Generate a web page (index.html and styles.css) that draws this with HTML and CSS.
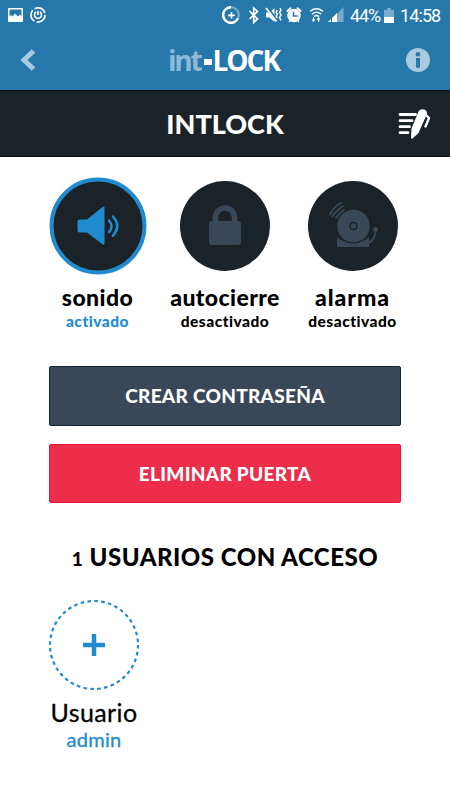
FILE: index.html
```html
<!DOCTYPE html>
<html lang="es">
<head>
    <meta charset="UTF-8">
    <meta name="viewport" content="width=device-width, initial-scale=1.0">
    <title>int-LOCK</title>
    <link rel="stylesheet" href="styles.css">
</head>
<body>
    <header class="top">
        <div class="status-bar">
            <svg class="status-left" width="48" height="32" viewBox="0 0 48 32" fill="none">
                <rect x="8" y="8" width="15" height="14" rx="1" fill="#fff"/>
                <path d="M9.500 9.500h12v7l-1.500-2-2 2-3-3-2.500 3-1.500-1.500-1.500 1.500z" fill="#2678ab"/>
                <circle cx="38" cy="15" r="7.100" stroke="#fff" stroke-width="1.700" stroke-dasharray="12.500 2.370"/>
                <path d="M36 12a3.500 3.500 0 1 0 4 0M38 11v4" stroke="#fff" stroke-width="1.600"/>
            </svg>
            <div class="status-right">
                <svg width="130" height="32" viewBox="220 0 130 32" fill="none">
                    <circle cx="231" cy="15" r="7.800" stroke="#78abcb" stroke-width="2.200"/>
                    <path d="M231 7.200a7.800 7.800 0 1 0 7 11" stroke="#fff" stroke-width="2.400"/>
                    <path d="M231.500 12v6.600M228.200 15.300h6.600" stroke="#fff" stroke-width="1.700"/>
                    <path d="M249.500 11l8 8-3.800 3.500V8l3.800 3.500-8 7.500" stroke="#fff" stroke-width="1.700"/>
                    <path d="M266 12.500h3.500l5-4.500v14l-5-4.500H266z" fill="#fff"/>
                    <path d="M267 7.500l10 13" stroke="#2678ab" stroke-width="3"/>
                    <path d="M266 8l10.500 13.500" stroke="#fff" stroke-width="1.700"/>
                    <path d="M277.200 10l-1 2 1 2-1 2 1 2M280 8l1 2-1.500 2.500 1.500 2.500-1.500 2.500 1.500 3" stroke="#fff" stroke-width="1.500"/>
                    <circle cx="294" cy="15.500" r="5.600" stroke="#fff" stroke-width="2.400"/>
                    <circle cx="294" cy="15.500" r="4.500" fill="#fff"/>
                    <path d="M287.500 11l3-2.800M300.500 11l-3-2.800" stroke="#fff" stroke-width="2" stroke-linecap="round"/>
                    <path d="M289.500 21.500l1.500-1.500M298.500 21.500l-1.500-1.500" stroke="#fff" stroke-width="1.500" stroke-linecap="round"/>
                    <path d="M293.500 12v4h4" stroke="#2678ab" stroke-width="1.600"/>
                    <path d="M310.500 11q6-4.500 12 0M312.500 13.700q4-3 8 0M314.500 16.200q2-1.500 4 0" stroke="#fff" stroke-width="1.500" stroke-linecap="round"/>
                    <path d="M311.500 19.500h4l-2 2.500zM313 17.500h1.200v2.500H313zM316.500 19.500h4l-2-2.500zM318 19.500h1.200V22H318z" fill="#fff"/>
                    <path d="M343.500 7v15H337V14z" fill="#78abcb"/>
                    <path d="M328 22l9-9v9z" fill="#fff"/>
                    <path d="M331.500 17v5" stroke="#2678ab"/>
                </svg>
                <span class="percent">44%</span>
                <svg class="battery" width="10" height="15" viewBox="0 0 10 15">
                    <path d="M3 0h4v2h3v13H0V2h3z" fill="#78abcb"/>
                    <path d="M0 9h10v6H0z" fill="#fff"/>
                </svg>
                <span class="clock">14:58</span>
            </div>
        </div>
        <nav class="nav">
            <svg class="back" width="16" height="22" viewBox="0 0 16 22" fill="none">
                <path d="M13.500 2L4 11l9.500 9" stroke="#a9c9de" stroke-width="5"/>
            </svg>
            <div class="logo"><span class="logo-int">int</span><i></i><span class="logo-lock">LOCK</span></div>
            <svg class="info" width="24" height="24" viewBox="0 0 24 24">
                <circle cx="12" cy="12" r="12" fill="#a9c9de"/>
                <circle cx="12" cy="6.300" r="2.300" fill="#2678ab"/>
                <path d="M10 10h4v8.500q0 1.500-2 1.500t-2-1.500z" fill="#2678ab"/>
            </svg>
        </nav>
    </header>

    <div class="title-bar">
        <h1>INTLOCK</h1>
        <svg class="edit" width="32" height="32" viewBox="0 0 32 32" fill="none">
            <path d="M2 6.500h15.500M2 12.700h12M2 18.700h9.500M2 24.700h8" stroke="#fff" stroke-width="2.800" stroke-linecap="round"/>
            <path d="M20.500 3.500c2.500-4.500 10.500-2 8 3.500L20.500 25l-6 5.500q-1.500.5-1.500-1l.5-9z" fill="#fff"/>
            <path d="M28.500 7.500l2.500 2.500-3.500 8.500" stroke="#fff" stroke-width="2.400" stroke-linecap="round" stroke-linejoin="round"/>
            <path d="M28.600 10.200L25.200 18" stroke="#1b2228" stroke-width="1.300"/>
        </svg>
    </div>

    <main>
        <section class="controls">
            <div class="control active">
                <svg class="round" width="98" height="98" viewBox="0 0 98 98" fill="none">
                    <circle cx="49" cy="49" r="46.500" fill="#1b2228" stroke="#218bd0" stroke-width="4"/>
                    <path d="M30.500 42.500h7.500L53.500 30q2-1.300 2 1v35q0 2.500-2 1.200L38 55.500h-7.500q-2 0-2-2v-9q0-2 2-2z" fill="#218bd0"/>
                    <path d="M60 43.500q5 5.500 0 11.500M64 39.500q8.500 9.500 0 19.300" stroke="#218bd0" stroke-width="2.500" stroke-linecap="round"/>
                </svg>
                <h2>sonido</h2>
                <p>activado</p>
            </div>
            <div class="control">
                <svg class="round" width="98" height="98" viewBox="0 0 98 98" fill="none">
                    <circle cx="49" cy="49" r="45" fill="#1b2228"/>
                    <rect x="33" y="44" width="32" height="24" rx="3" fill="#394858"/>
                    <path d="M39.500 45v-4.500a9.500 9.500 0 0 1 19 0V45" stroke="#394858" stroke-width="5.500"/>
                </svg>
                <h2>autocierre</h2>
                <p>desactivado</p>
            </div>
            <div class="control">
                <svg class="round" width="98" height="98" viewBox="0 0 98 98" fill="none">
                    <circle cx="49" cy="49" r="45" fill="#1b2228"/>
                    <path d="M33 59.500q4 6 16 6t16-6V70H33z" fill="#394858"/>
                    <circle cx="49.500" cy="49" r="17.500" fill="#1b2228"/>
                    <circle cx="49.500" cy="49" r="16.200" fill="#394858"/>
                    <circle cx="49.500" cy="49" r="3.500" stroke="#1b2228" stroke-width="1.400"/>
                    <path d="M64.500 66q7-3.500 7-13" stroke="#394858" stroke-width="2"/>
                    <circle cx="71.500" cy="52.500" r="2.400" fill="#394858"/>
                    <path d="M26 37.500q4-8 11.500-12M28.500 39.500q4.500-7 10.500-10.500M32 41q2.500-4.500 8-8" stroke="#394858" stroke-width="1.900" stroke-linecap="round"/>
                </svg>
                <h2 class="wide">alarma</h2>
                <p>desactivado</p>
            </div>
        </section>

        <section class="buttons">
            <button class="btn btn-create">CREAR CONTRASEÑA</button>
            <button class="btn btn-delete">ELIMINAR PUERTA</button>
        </section>

        <h3 class="users-title"><span>1</span> USUARIOS CON ACCESO</h3>

        <div class="user">
            <svg width="90" height="90" viewBox="0 0 90 90" fill="none">
                <circle cx="45" cy="45" r="44" stroke="#218bd0" stroke-width="2.200" stroke-dasharray="3.600 3.311"/>
                <path d="M45 36.300v17.400M36.300 45h17.400" stroke="#218bd0" stroke-width="4.500" stroke-linecap="square"/>
            </svg>
            <span class="user-name">Usuario</span>
            <span class="user-role">admin</span>
        </div>
    </main>
</body>
</html>
```
FILE: styles.css
```css
* {
    margin: 0;
    padding: 0;
    box-sizing: border-box;
}

body {
    width: 450px;
    height: 800px;
    overflow: hidden;
    font-family: "Lato", sans-serif;
    font-variant-ligatures: none;
    background-color: #fff;
    color: #000;
}

svg {
    display: block;
    flex: none;
}

.top {
    height: 90px;
    background-color: #2678ab;
}

.status-bar {
    display: flex;
    justify-content: space-between;
    height: 32px;
}

.status-right {
    display: flex;
    width: 230px;
    color: #fff;
    font-family: "Roboto", sans-serif;
    font-size: 18px;
    line-height: 32px;
}

.percent {
    width: 34px;
    letter-spacing: -1.1px;
}

.battery {
    margin: 8px 6px 0 0;
}

.clock {
    letter-spacing: -0.9px;
}

.nav {
    display: flex;
    justify-content: space-between;
    align-items: center;
    height: 56px;
    padding: 0 20px;
}

.logo {
    display: flex;
    align-items: center;
    padding-left: 5px;
    font-family: "Open Sans", sans-serif;
    font-size: 28px;
    font-weight: 700;
    line-height: 32px;
}

.logo i {
    width: 8px;
    height: 6px;
    margin: 3px 0 0 4px;
    background-color: #fff;
}

.logo-int {
    color: #8db9d5;
    letter-spacing: -2.2px;
}

.logo-lock {
    color: #fff;
    letter-spacing: -2px;
}

.title-bar {
    display: grid;
    grid-template-columns: 1fr auto 1fr;
    align-items: center;
    height: 67px;
    padding: 0 20px;
    border-top: 1px solid #080d12;
    border-bottom: 1px solid #080d12;
    background-color: #1b2228;
    color: #fff;
}

h1 {
    grid-column: 2;
    font-size: 27px;
    font-weight: 900;
    line-height: 32px;
}

.edit {
    justify-self: end;
}

.controls {
    display: grid;
    grid-template-columns: repeat(3, 127.5px);
    justify-content: center;
    padding-top: 20px;
}

.control {
    display: flex;
    flex-direction: column;
    align-items: center;
}

.control h2 {
    height: 26px;
    margin-top: 9px;
    font-size: 23px;
    font-weight: 900;
    line-height: 26px;
    letter-spacing: 0.4px;
}

.control h2.wide {
    letter-spacing: 1px;
}

.control p {
    height: 20px;
    margin-top: 1px;
    font-size: 15.5px;
    font-weight: 900;
    line-height: 20px;
    letter-spacing: 0.5px;
}

.control.active p {
    color: #218bd0;
}

.buttons {
    display: flex;
    flex-direction: column;
    gap: 18px;
    padding: 35px 49px 0;
}

.btn {
    width: 352px;
    height: 60px;
    padding-bottom: 2px;
    border: 1px solid #12233c;
    border-radius: 2px;
    background-color: #394858;
    color: #fff;
    font-family: inherit;
    font-size: 19px;
    font-weight: 900;
    letter-spacing: 0.3px;
}

.btn-delete {
    height: 59px;
    padding-bottom: 0;
    border-color: #eb1539;
    background-color: #ed2e4b;
}

.users-title {
    margin-top: 38px;
    font-size: 24px;
    font-weight: 900;
    line-height: 32px;
    letter-spacing: 0.5px;
    text-align: center;
}

.users-title span {
    font-size: 19px;
}

.user {
    display: flex;
    flex-direction: column;
    align-items: center;
    width: 90px;
    margin: 25px 0 0 49px;
}

.user-name {
    margin-top: 7px;
    font-size: 25px;
    line-height: 30px;
    letter-spacing: 0.4px;
    -webkit-text-stroke: 0.3px #000;
}

.user-role {
    font-size: 20px;
    line-height: 24px;
    letter-spacing: 0.3px;
    color: #218bd0;
    -webkit-text-stroke: 0.3px #218bd0;
}
```
